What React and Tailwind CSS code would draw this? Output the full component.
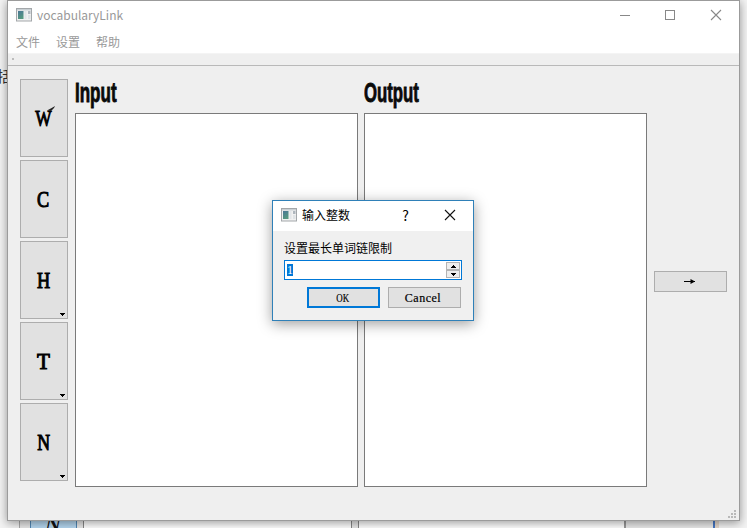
import React from 'react';

const UI = "font-['Noto_Sans_CJK_SC','Noto_Sans',sans-serif]";
const SERIF = "font-['Liberation_Serif',serif]";

function AppIcon({ className }) {
  return (
    <svg width="16" height="14" viewBox="0 0 16 14" className={className}>
      <defs>
        <linearGradient id="pane" x1="0" y1="0" x2="0.4" y2="1">
          <stop offset="0" stopColor="#4a7796" />
          <stop offset="1" stopColor="#559880" />
        </linearGradient>
      </defs>
      <rect x="0.5" y="0.5" width="15" height="12.5" fill="#f1f1f1" stroke="#a3a7aa" />
      <rect x="1" y="1" width="14" height="1.5" fill="#c9d0d4" />
      <rect x="2" y="3" width="5.5" height="8" fill="url(#pane)" />
      <rect x="8.5" y="3" width="2" height="8" fill="#e2e5e8" />
      <rect x="12" y="3" width="2.5" height="3" fill="#aeb6bd" />
      <rect x="12" y="7" width="2.5" height="4" fill="#dfe3e6" />
    </svg>
  );
}

function CloseGlyph({ color, className }) {
  return (
    <svg width="12" height="12" viewBox="0 0 12 12" className={className}>
      <path d="M1 1L11 11M11 1L1 11" stroke={color} strokeWidth="1.1" fill="none" />
    </svg>
  );
}

function ToolButton({ letter, menu, scale }) {
  return (
    <button className="relative flex h-[78px] w-12 shrink-0 flex-col items-center justify-center border border-[#adadad] bg-[#e1e1e1] pr-px">
      <span className={`block origin-center text-[24px] leading-6 text-black [-webkit-text-stroke:1.1px_#000] ${SERIF} ${scale}`}>
        {letter}
      </span>
      {letter === 'W' && (
        <svg width="8" height="7" viewBox="0 0 8 7" className="absolute top-[26px] left-[26px]">
          <path d="M0 4.5Q4 2.5 8 0L7 2L4 5Z" fill="#222" />
        </svg>
      )}
      {menu && (
        <svg width="5" height="3" viewBox="0 0 5 3" className="absolute right-[2px] bottom-[2px]" shapeRendering="crispEdges">
          <path d="M0 0H5V1H4V2H3V3H2V2H1V1H0Z" fill="#000" />
        </svg>
      )}
    </button>
  );
}

function Panel({ title, scale }) {
  return (
    <section className="flex w-[283px] shrink-0 flex-col">
      <h2 className={`h-[34px] origin-left pt-px font-['Liberation_Sans',sans-serif] text-[27px] leading-[27px] font-bold whitespace-nowrap text-[#0a0a0a] [-webkit-text-stroke:0.9px_#0a0a0a] ${scale}`}>
        {title}
      </h2>
      <div className="h-[374px] border border-[#7a7a7a] bg-white" />
    </section>
  );
}

function SizeGrip() {
  const dots = [[6, 0], [3, 3], [6, 3], [0, 6], [3, 6], [6, 6]];
  return (
    <svg width="8" height="8" viewBox="0 0 8 8" shapeRendering="crispEdges">
      {dots.map(([x, y]) => (
        <rect key={`${x}-${y}`} x={x} y={y} width="2" height="2" fill="#b9b9b9" />
      ))}
    </svg>
  );
}

function MainWindow() {
  return (
    <div className="absolute top-0 left-[7px] flex h-[521px] w-[733px] flex-col border border-[#9b9b9b] bg-[#efefef] shadow-[0_2px_9px_rgba(0,0,0,0.4)]">
      <header className="flex h-[30px] shrink-0 items-center bg-white pl-2">
        <AppIcon className="mt-[-2px]" />
        <span className={`-mt-[2px] ml-[5px] text-[12px] leading-4 text-[#999] ${UI}`}>vocabularyLink</span>
        <div className="-mt-[2px] ml-auto flex items-center pr-[17px]">
          <div className="mr-[35px] h-px w-[10px] bg-[#888]" />
          <div className="mr-[35px] size-[10px] border border-[#888]" />
          <CloseGlyph color="#888" />
        </div>
      </header>
      <nav className={`flex h-[23px] shrink-0 items-center gap-4 border-b border-[#f4f4f4] bg-white pl-2 text-[12px] leading-4 text-[#999] ${UI}`}>
        <span>文件</span>
        <span>设置</span>
        <span>帮助</span>
      </nav>
      <div className="h-[12px] shrink-0 border-b border-[#b9b9b9] pt-1 pl-1">
        <div className="size-[2px] bg-[#bcbcbc]" />
      </div>
      <main className="flex flex-1 pt-[13px] pl-3">
        <div className="flex flex-col gap-[3px]">
          <ToolButton letter="W" scale="scale-x-[0.72]" />
          <ToolButton letter="C" scale="scale-x-[0.76]" />
          <ToolButton letter="H" scale="scale-x-[0.76]" menu />
          <ToolButton letter="T" scale="scale-x-[0.88]" menu />
          <ToolButton letter="N" scale="scale-x-[0.74]" menu />
        </div>
        <div className="ml-[7px] flex gap-[6px]">
          <Panel title="Input" scale="scale-x-[0.63]" />
          <Panel title="Output" scale="scale-x-[0.62]" />
        </div>
        <div className="ml-[7px] flex h-[404px] items-center">
          <button className="flex h-[21px] w-[73px] items-center justify-center border border-[#adadad] bg-[#e1e1e1]">
            <svg width="11" height="5" viewBox="0 0 11 5" className="-ml-[2px]">
              <path d="M0 2H11V3H0Z" fill="#000" shapeRendering="crispEdges" />
              <path d="M6.5 0L11 2.5L6.5 5Z" fill="#000" />
            </svg>
          </button>
        </div>
      </main>
      <footer className="flex justify-end pr-[3px] pb-[2px]">
        <SizeGrip />
      </footer>
    </div>
  );
}

function SpinButton({ up }) {
  return (
    <span className="flex h-[8px] w-[14px] items-center justify-center border border-[#b4b4b4] bg-[#eee]">
      <svg width="5" height="3" viewBox="0 0 5 3" shapeRendering="crispEdges">
        <path d={up ? 'M2 0H3V1H4V2H5V3H0V2H1V1H2Z' : 'M0 0H5V1H4V2H3V3H2V2H1V1H0Z'} fill="#000" />
      </svg>
    </span>
  );
}

function InputDialog() {
  return (
    <div className="absolute top-[200px] left-[272px] flex h-[121px] w-[202px] flex-col border border-[#2f80b8] bg-[#f0f0f0] shadow-[0_3px_13px_rgba(0,0,0,0.38)]">
      <header className="flex h-[30px] shrink-0 items-center bg-white pl-2">
        <AppIcon className="mt-[-2px]" />
        <span className={`-mt-[2px] ml-[5px] text-[12px] leading-4 text-black ${UI}`}>输入整数</span>
        <span className={`-mt-[3px] ml-auto text-[14px] leading-4 text-black ${UI}`}>?</span>
        <CloseGlyph color="#111" className="-mt-[2px] mr-[17px] ml-[35px]" />
      </header>
      <div className="flex flex-col pt-2 pl-[11px]">
        <label className={`h-[21px] text-[12px] leading-[17px] text-black ${UI}`}>设置最长单词链限制</label>
        <div className="flex h-5 w-[178px] items-center border border-[#0078d7] bg-white px-[2px]">
          <span className={`h-[12px] w-[6px] bg-[#0078d7] text-[12px] leading-[13px] text-white ${SERIF}`}>1</span>
          <div className="-mr-px ml-auto flex flex-col">
            <SpinButton up />
            <SpinButton />
          </div>
        </div>
        <div className={`mt-[7px] ml-[23px] flex gap-2 text-[12px] leading-[15px] text-black [-webkit-text-stroke:0.2px_#000] ${SERIF}`}>
          <button className="h-[21px] w-[73px] border-2 border-[#0078d7] bg-[#e1e1e1] pt-[2px] pr-[2px]">
            <span className="inline-block scale-x-[0.74]">OK</span>
          </button>
          <button className="h-[21px] w-[73px] border border-[#adadad] bg-[#e1e1e1] pt-[2px] pr-[3px] tracking-[0.5px]">Cancel</button>
        </div>
      </div>
    </div>
  );
}

function WindowBehind() {
  return (
    <div className="absolute inset-0 flex flex-col justify-between bg-[#f3f3f3]">
      <div className="h-[86px] w-2 overflow-hidden pt-[67px]">
        <span className={`-ml-[3px] block w-4 text-[15px] leading-[18px] text-[#333] ${UI}`}>括</span>
      </div>
      <div className="flex h-2 items-stretch bg-[#f3f3f3]">
        <div className="w-[20px] border-r border-[#aaa]" />
        <div className="w-[10px] bg-[#e8e8e8]" />
        <div className="flex w-[47px] justify-center overflow-hidden border-x border-[#5288b5] bg-[#b5d7f0]">
          <span className={`-mt-[6px] block h-5 rotate-12 text-[20px] leading-5 font-bold text-[#111] ${SERIF}`}>N</span>
        </div>
        <div className="w-[7px] border-r border-[#888] bg-[#e8e8e8]" />
        <div className="w-[268px] border-r border-[#888] bg-white" />
        <div className="w-[7px] border-r border-[#888] bg-[#e8e8e8]" />
        <div className="w-[267px] border-r-2 border-[#999] bg-white" />
        <div className="w-[89px] border-r-2 border-[#4778c4] bg-[#eaeaea]" />
        <div className="w-1 bg-[#e5d8cb]" />
      </div>
    </div>
  );
}

export default function App() {
  return (
    <div className="relative h-[528px] w-[747px] overflow-hidden">
      <WindowBehind />
      <MainWindow />
      <InputDialog />
    </div>
  );
}
